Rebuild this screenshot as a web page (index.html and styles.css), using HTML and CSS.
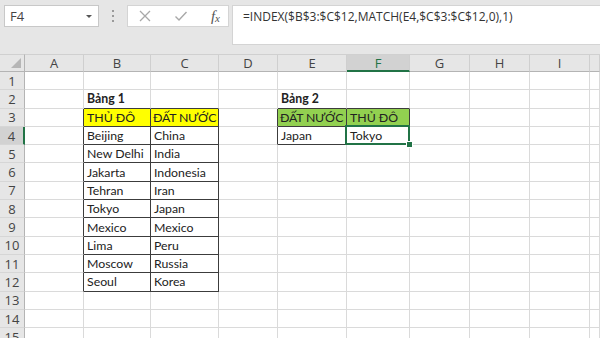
FILE: index.html
```html
<!DOCTYPE html>
<html>

<head>
    <meta charset="utf-8" />
    <title>INDEX MATCH</title>
    <link rel="stylesheet" href="styles.css">
</head>

<body>
    <div class="toolbar">
        <div class="name-box">
            <span>F4</span>
            <span class="caret"></span>
        </div>
        <div class="dots"><i></i><i></i><i></i></div>
        <div class="fn-box">
            <svg width="14" height="14" viewBox="0 0 14 14">
                <path d="M2 2 L12 12 M12 2 L2 12" stroke="#a8a8a8" stroke-width="1.3" fill="none" />
            </svg>
            <svg width="14" height="14" viewBox="0 0 14 14">
                <path d="M1.5 7.5 L5 11 L12.5 3" stroke="#a8a8a8" stroke-width="1.4" fill="none" />
            </svg>
            <span class="fx">f<sub>x</sub></span>
        </div>
        <div class="formula">=INDEX($B$3:$C$12,MATCH(E4,$C$3:$C$12,0),1)</div>
    </div>

    <div class="sheet">
        <!-- column headers -->
        <div class="h corner"><span class="tri"></span></div>
        <div class="h">A</div>
        <div class="h">B</div>
        <div class="h">C</div>
        <div class="h">D</div>
        <div class="h">E</div>
        <div class="h sel">F</div>
        <div class="h">G</div>
        <div class="h">H</div>
        <div class="h">I</div>
        <div class="h"></div>

        <!-- 1 -->
        <div class="r">1</div>
        <div class="c"></div><div class="c"></div><div class="c"></div><div class="c"></div><div class="c"></div>
        <div class="c"></div><div class="c"></div><div class="c"></div><div class="c"></div><div class="c"></div>

        <!-- 2 -->
        <div class="r">2</div>
        <div class="c"></div>
        <div class="c bb b">Bảng 1</div>
        <div class="c bb"></div>
        <div class="c"></div>
        <div class="c bb b">Bảng 2</div>
        <div class="c bb"></div>
        <div class="c"></div><div class="c"></div><div class="c"></div><div class="c"></div>

        <!-- 3 -->
        <div class="r">3</div>
        <div class="c br"></div>
        <div class="c br bb yellow">THỦ ĐÔ</div>
        <div class="c br bb yellow caps">ĐẤT NƯỚC</div>
        <div class="c br"></div>
        <div class="c br bb green caps">ĐẤT NƯỚC</div>
        <div class="c br bb green">THỦ ĐÔ</div>
        <div class="c"></div><div class="c"></div><div class="c"></div><div class="c"></div>

        <!-- 4 -->
        <div class="r sel">4</div>
        <div class="c br"></div>
        <div class="c br bb">Beijing</div>
        <div class="c br bb">China</div>
        <div class="c br"></div>
        <div class="c br bb">Japan</div>
        <div class="c br bb active">Tokyo</div>
        <div class="c"></div><div class="c"></div><div class="c"></div><div class="c"></div>

        <!-- 5 -->
        <div class="r">5</div>
        <div class="c br"></div>
        <div class="c br bb">New Delhi</div>
        <div class="c br bb">India</div>
        <div class="c"></div><div class="c"></div><div class="c"></div>
        <div class="c"></div><div class="c"></div><div class="c"></div><div class="c"></div>

        <!-- 6 -->
        <div class="r">6</div>
        <div class="c br"></div>
        <div class="c br bb">Jakarta</div>
        <div class="c br bb">Indonesia</div>
        <div class="c"></div><div class="c"></div><div class="c"></div>
        <div class="c"></div><div class="c"></div><div class="c"></div><div class="c"></div>

        <!-- 7 -->
        <div class="r">7</div>
        <div class="c br"></div>
        <div class="c br bb">Tehran</div>
        <div class="c br bb">Iran</div>
        <div class="c"></div><div class="c"></div><div class="c"></div>
        <div class="c"></div><div class="c"></div><div class="c"></div><div class="c"></div>

        <!-- 8 -->
        <div class="r">8</div>
        <div class="c br"></div>
        <div class="c br bb">Tokyo</div>
        <div class="c br bb">Japan</div>
        <div class="c"></div><div class="c"></div><div class="c"></div>
        <div class="c"></div><div class="c"></div><div class="c"></div><div class="c"></div>

        <!-- 9 -->
        <div class="r">9</div>
        <div class="c br"></div>
        <div class="c br bb">Mexico</div>
        <div class="c br bb">Mexico</div>
        <div class="c"></div><div class="c"></div><div class="c"></div>
        <div class="c"></div><div class="c"></div><div class="c"></div><div class="c"></div>

        <!-- 10 -->
        <div class="r">10</div>
        <div class="c br"></div>
        <div class="c br bb">Lima</div>
        <div class="c br bb">Peru</div>
        <div class="c"></div><div class="c"></div><div class="c"></div>
        <div class="c"></div><div class="c"></div><div class="c"></div><div class="c"></div>

        <!-- 11 -->
        <div class="r">11</div>
        <div class="c br"></div>
        <div class="c br bb">Moscow</div>
        <div class="c br bb">Russia</div>
        <div class="c"></div><div class="c"></div><div class="c"></div>
        <div class="c"></div><div class="c"></div><div class="c"></div><div class="c"></div>

        <!-- 12 -->
        <div class="r">12</div>
        <div class="c br"></div>
        <div class="c br bb">Seoul</div>
        <div class="c br bb">Korea</div>
        <div class="c"></div><div class="c"></div><div class="c"></div>
        <div class="c"></div><div class="c"></div><div class="c"></div><div class="c"></div>

        <!-- 13 -->
        <div class="r">13</div>
        <div class="c"></div><div class="c"></div><div class="c"></div><div class="c"></div><div class="c"></div>
        <div class="c"></div><div class="c"></div><div class="c"></div><div class="c"></div><div class="c"></div>

        <!-- 14 -->
        <div class="r">14</div>
        <div class="c"></div><div class="c"></div><div class="c"></div><div class="c"></div><div class="c"></div>
        <div class="c"></div><div class="c"></div><div class="c"></div><div class="c"></div><div class="c"></div>

        <!-- 15 -->
        <div class="r">15</div>
        <div class="c"></div><div class="c"></div><div class="c"></div><div class="c"></div><div class="c"></div>
        <div class="c"></div><div class="c"></div><div class="c"></div><div class="c"></div><div class="c"></div>
    </div>
</body>

</html>
```

FILE: styles.css
```css
body {
    margin: 0;
    width: 600px;
    height: 338px;
    overflow: hidden;
    background: #fff;
    font-family: "Open Sans", "Noto Sans", sans-serif;
}

/* Formula bar area */
.toolbar {
    height: 54px;
    box-sizing: border-box;
    padding: 5px 0 0 4px;
    background: #e6e6e6;
    display: flex;
    align-items: flex-start;
}

.name-box {
    width: 95px;
    height: 22px;
    box-sizing: border-box;
    background: #fff;
    border: 1px solid #c8c8c8;
    display: flex;
    align-items: center;
    justify-content: space-between;
    padding: 0 6px 0 5px;
    font-size: 13px;
    color: #444;
}

.caret {
    width: 0;
    height: 0;
    border-left: 3px solid transparent;
    border-right: 3px solid transparent;
    border-top: 3px solid #555;
}

.dots {
    width: 28px;
    height: 22px;
    display: flex;
    flex-direction: column;
    align-items: center;
    justify-content: center;
    gap: 3px;
}

.dots i {
    width: 2px;
    height: 2px;
    background: #9a9a9a;
}

.fn-box {
    width: 102px;
    height: 22px;
    box-sizing: border-box;
    background: #fff;
    border: 1px solid #d4d4d4;
    display: flex;
    align-items: center;
    justify-content: space-between;
    padding: 0 8px 0 10px;
}

.fx {
    font-family: "Liberation Serif", serif;
    font-style: italic;
    font-size: 15px;
    color: #555;
    line-height: 1;
}

.fx sub {
    font-size: 11px;
    vertical-align: -1px;
}

.formula {
    margin-left: 3px;
    flex: 1;
    height: 40px;
    box-sizing: border-box;
    background: #fff;
    border: 1px solid #d4d4d4;
    border-right: 0;
    padding: 2px 0 0 10px;
    font-size: 12px;
    line-height: 18px;
    color: #333;
    white-space: nowrap;
}

/* Grid */
.sheet {
    display: grid;
    grid-template-columns: 25px 59px 67px 68px 59px 69px 63px 60px 60px 60px 10px;
    grid-template-rows: 18px repeat(15, 18.3px);
}

.h {
    background: #e6e6e6;
    border-right: 1px solid #cfcfcf;
    border-bottom: 1px solid #b4b4b4;
    border-top: 1px solid #d0d0d0;
    box-sizing: border-box;
    display: flex;
    align-items: center;
    justify-content: center;
    font-size: 13px;
    color: #444;
}

.h.sel {
    background: #d2d2d2;
    color: #217346;
    border-bottom: 2px solid #217346;
}

.corner {
    position: relative;
    border-right-color: #b4b4b4;
}

.tri {
    position: absolute;
    right: 3px;
    bottom: 3px;
    width: 0;
    height: 0;
    border-left: 10px solid transparent;
    border-bottom: 10px solid #b6b6b6;
}

.r {
    background: #e6e6e6;
    border-right: 1px solid #b4b4b4;
    border-bottom: 1px solid #d6d6d6;
    box-sizing: border-box;
    display: flex;
    align-items: center;
    justify-content: center;
    font-size: 13px;
    color: #444;
}

.r.sel {
    background: #d2d2d2;
    border-right: 2px solid #217346;
}

.c {
    border-right: 1px solid #dadada;
    border-bottom: 1px solid #dadada;
    box-sizing: border-box;
    display: flex;
    align-items: center;
    padding-left: 3px;
    font-family: Lato, "Open Sans", sans-serif;
    font-size: 12.3px;
    color: #222;
    white-space: nowrap;
    overflow: hidden;
}

.c.br {
    border-right-color: #3c3c3c;
}

.c.bb {
    border-bottom-color: #3c3c3c;
}

.c.b {
    font-weight: bold;
}

.c.caps {
    padding-left: 2px;
    letter-spacing: -0.2px;
}

.yellow {
    background: #ffff00;
}

.green {
    background: #92d050;
}

/* active cell F4 */
.active {
    position: relative;
    overflow: visible;
}

.active::after {
    content: "";
    position: absolute;
    left: -2px;
    top: -2px;
    right: -1px;
    bottom: -1px;
    border: 2px solid #217346;
}

.active::before {
    content: "";
    position: absolute;
    right: -4px;
    bottom: -4px;
    width: 5px;
    height: 5px;
    background: #217346;
    border: 1px solid #fff;
    z-index: 1;
}
```
